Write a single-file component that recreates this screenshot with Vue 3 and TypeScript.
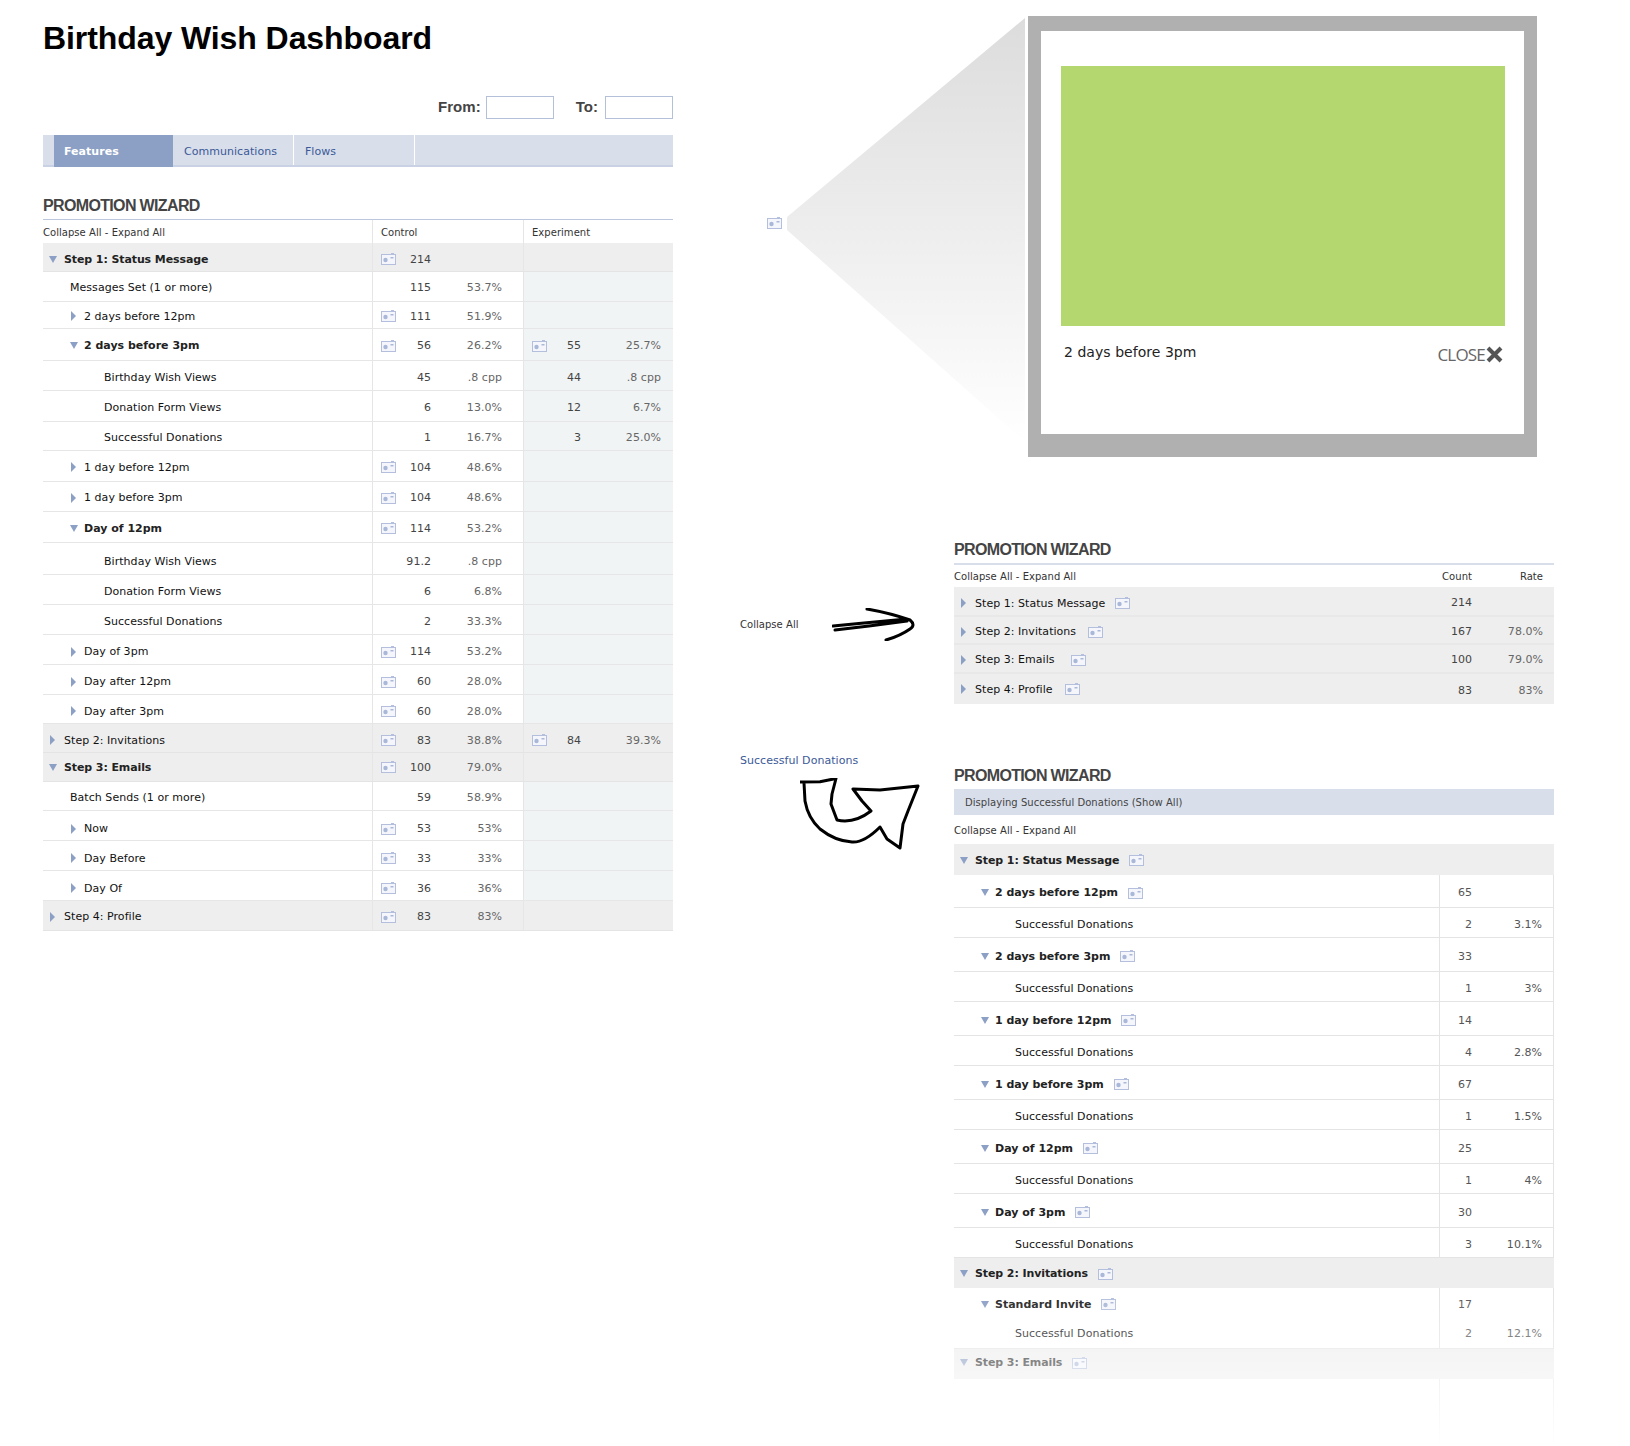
<template>
  <div class="page">
    <svg class="defs" width="0" height="0">
      <symbol id="cam" viewBox="0 0 15 12">
        <rect x="0.5" y="1.5" width="14" height="10" fill="#f4f6fb" stroke="#b3bfdc" />
        <rect x="10" y="0" width="3" height="2" fill="#b3bfdc" />
        <circle cx="4.5" cy="7" r="2.2" fill="#a9b7d8" />
        <rect x="9.5" y="4" width="3" height="1.5" fill="#a9b7d8" />
      </symbol>
    </svg>

    <!-- main dashboard -->
    <main class="dash">
      <h1 class="title">Birthday Wish Dashboard</h1>
      <div class="dates">
        <label class="date-label">From:</label>
        <input class="date-input" type="text" />
        <label class="date-label to">To:</label>
        <input class="date-input" type="text" />
      </div>
      <nav class="tabs">
        <a class="tab active">Features</a>
        <a class="tab">Communications</a>
        <a class="tab">Flows</a>
      </nav>
      <h2 class="heading first">PROMOTION WIZARD</h2>
      <div class="main-head">
        <div class="head-cell">Collapse All - Expand All</div>
        <div class="head-cell ruled pad">Control</div>
        <div class="head-cell ruled pad">Experiment</div>
      </div>
      <div
        v-for="(r, i) in mainRows"
        :key="i"
        class="main-row"
        :class="{ group: r.level === 0 }"
        :style="{ height: r.h + 'px', '--shift': r.s + 'px' }"
      >
        <div class="name" :class="['lv' + r.level, { bold: r.bold }]">
          <i v-if="r.arrow" class="tri" :class="r.arrow"></i>
          <span>{{ r.label }}</span>
        </div>
        <div class="metric">
          <svg v-if="r.c[0]" class="cam"><use href="#cam" /></svg>
          <span v-else></span>
          <span class="count">{{ r.c[1] }}</span>
          <span class="rate">{{ r.c[2] }}</span>
        </div>
        <div class="metric exp">
          <template v-if="r.e">
            <svg v-if="r.e[0]" class="cam"><use href="#cam" /></svg>
            <span v-else></span>
            <span class="count">{{ r.e[1] }}</span>
            <span class="rate">{{ r.e[2] }}</span>
          </template>
        </div>
      </div>
    </main>

    <!-- annotations on the right -->
    <aside class="notes">
      <section class="popup-row">
        <svg class="cam solo"><use href="#cam" /></svg>
        <svg class="wedge" width="238" height="441" viewBox="0 0 238 441">
          <defs>
            <linearGradient id="wedge-fade" x1="0" y1="0" x2="0" y2="1">
              <stop offset="0" stop-color="#dcdcdc" />
              <stop offset="1" stop-color="#ffffff" />
            </linearGradient>
          </defs>
          <polygon points="238,2 0,201 0,214 238,426" fill="url(#wedge-fade)" />
        </svg>
        <div class="window">
          <div class="shot"></div>
          <div class="caption">
            <span>2 days before 3pm</span>
            <span class="close">CLOSE
              <svg width="17" height="17" viewBox="0 0 17 17">
                <path d="M2 2 L15 15 M15 2 L2 15" stroke="#555" stroke-width="4" fill="none" />
              </svg>
            </span>
          </div>
        </div>
      </section>

      <section class="wiz-row collapsed-row">
        <div class="note side">
          <span class="note-label">Collapse All</span>
          <svg width="84" height="33" viewBox="0 0 84 33">
            <path
              d="M1 18 L32 15 L75 11 M3 22 L37 18 L75 13 M35 1 Q58 5 78 12 Q84 17 78 21 Q68 28 54 32"
              fill="none" stroke="#000" stroke-width="3" stroke-linecap="round" stroke-linejoin="round"
            />
          </svg>
        </div>
        <div class="panel">
          <h2 class="heading thick">PROMOTION WIZARD</h2>
          <div class="sum-row sum-head">
            <div>Collapse All - Expand All</div>
            <div class="num">Count</div>
            <div class="num">Rate</div>
          </div>
          <div
            v-for="s in summary"
            :key="s.label"
            class="sum-row sum-item"
            :style="{ height: s.h + 'px', '--shift': s.s + 'px', '--gap': s.gap + 'px' }"
          >
            <div class="name lv0">
              <i class="tri right"></i>
              <span>{{ s.label }}</span>
              <svg class="cam after"><use href="#cam" /></svg>
            </div>
            <div class="num count">{{ s.count }}</div>
            <div class="num rate">{{ s.rate }}</div>
          </div>
        </div>
      </section>

      <section class="wiz-row filtered-row">
        <div class="note stacked">
          <a class="note-link">Successful Donations</a>
          <svg class="swoop" width="122" height="72" viewBox="0 0 122 72">
            <path
              d="M0 4 L20 3.7 L36 0.5 L32 16 L31 26 L37 42 Q54 46 71 33 L62 23 L53 11 L80 12 L118 8 L108 33 L103 46 L100 70 L87 61 L80 49 Q64 65 52 64 Q35 63 20 51 Q8 40 5 23 L4 5"
              fill="none" stroke="#000" stroke-width="3" stroke-linecap="round" stroke-linejoin="round"
            />
          </svg>
        </div>
        <div class="panel">
          <h2 class="heading">PROMOTION WIZARD</h2>
          <div class="banner">Displaying Successful Donations (Show All)</div>
          <div class="filter-head">Collapse All - Expand All</div>
          <div
            v-for="(r, i) in filterRows"
            :key="i"
            class="filter-row"
            :class="{ group: r.level === 0, plain: r.noline, lift: r.lift }"
            :style="{ height: r.h + 'px', '--shift': (r.s ?? 3) + 'px' }"
          >
            <div class="name" :class="['lv' + r.level, { bold: r.arrow }]">
              <i v-if="r.arrow" class="tri down"></i>
              <span>{{ r.label }}</span>
              <svg v-if="r.arrow" class="cam after"><use href="#cam" /></svg>
            </div>
            <div class="num count cell-count">{{ r.count }}</div>
            <div class="num rate">{{ r.rate }}</div>
          </div>
          <div class="filter-row plain" style="height: 68px">
            <div></div>
            <div class="cell-count"></div>
            <div></div>
          </div>
          <div class="fade"></div>
        </div>
      </section>
    </aside>
  </div>
</template>

<script setup lang="ts">
type Metric = [boolean, string, string]

interface MainRow {
  label: string
  level: number
  h: number
  s: number
  bold?: boolean
  arrow?: 'down' | 'right'
  c: Metric
  e?: Metric
}

interface FilterRow {
  label: string
  level: number
  h: number
  s?: number
  arrow?: boolean
  noline?: boolean
  lift?: boolean
  count?: string
  rate?: string
}

// s = how far the row's text sits below the middle (times two), the mock isn't even
const mainRows: MainRow[] = [
  { label: 'Step 1: Status Message', level: 0, h: 29, s: 4, bold: true, arrow: 'down', c: [true, '214', ''] },
  { label: 'Messages Set (1 or more)', level: 1, h: 30, s: 2, c: [false, '115', '53.7%'] },
  { label: '2 days before 12pm', level: 2, h: 27, s: 2, arrow: 'right', c: [true, '111', '51.9%'] },
  { label: '2 days before 3pm', level: 2, h: 32, s: 2, bold: true, arrow: 'down', c: [true, '56', '26.2%'], e: [true, '55', '25.7%'] },
  { label: 'Birthday Wish Views', level: 3, h: 30, s: 4, c: [false, '45', '.8 cpp'], e: [false, '44', '.8 cpp'] },
  { label: 'Donation Form Views', level: 3, h: 31, s: 2, c: [false, '6', '13.0%'], e: [false, '12', '6.7%'] },
  { label: 'Successful Donations', level: 3, h: 29, s: 2, c: [false, '1', '16.7%'], e: [false, '3', '25.0%'] },
  { label: '1 day before 12pm', level: 2, h: 31, s: 2, arrow: 'right', c: [true, '104', '48.6%'] },
  { label: '1 day before 3pm', level: 2, h: 30, s: 2, arrow: 'right', c: [true, '104', '48.6%'] },
  { label: 'Day of 12pm', level: 2, h: 31, s: 2, bold: true, arrow: 'down', c: [true, '114', '53.2%'] },
  { label: 'Birthday Wish Views', level: 3, h: 32, s: 6, c: [false, '91.2', '.8 cpp'] },
  { label: 'Donation Form Views', level: 3, h: 30, s: 4, c: [false, '6', '6.8%'] },
  { label: 'Successful Donations', level: 3, h: 30, s: 4, c: [false, '2', '33.3%'] },
  { label: 'Day of 3pm', level: 2, h: 30, s: 4, arrow: 'right', c: [true, '114', '53.2%'] },
  { label: 'Day after 12pm', level: 2, h: 30, s: 4, arrow: 'right', c: [true, '60', '28.0%'] },
  { label: 'Day after 3pm', level: 2, h: 29, s: 4, arrow: 'right', c: [true, '60', '28.0%'] },
  { label: 'Step 2: Invitations', level: 0, h: 29, s: 4, arrow: 'right', c: [true, '83', '38.8%'], e: [true, '84', '39.3%'] },
  { label: 'Step 3: Emails', level: 0, h: 29, s: 0, bold: true, arrow: 'down', c: [true, '100', '79.0%'] },
  { label: 'Batch Sends (1 or more)', level: 1, h: 29, s: 2, c: [false, '59', '58.9%'] },
  { label: 'Now', level: 2, h: 30, s: 6, arrow: 'right', c: [true, '53', '53%'] },
  { label: 'Day Before', level: 2, h: 30, s: 5, arrow: 'right', c: [true, '33', '33%'] },
  { label: 'Day Of', level: 2, h: 30, s: 5, arrow: 'right', c: [true, '36', '36%'] },
  { label: 'Step 4: Profile', level: 0, h: 30, s: 2, arrow: 'right', c: [true, '83', '83%'] },
]

const summary = [
  { label: 'Step 1: Status Message', count: '214', rate: '', h: 30, s: 4, gap: 10 },
  { label: 'Step 2: Invitations', count: '167', rate: '78.0%', h: 28, s: 3, gap: 12 },
  { label: 'Step 3: Emails', count: '100', rate: '79.0%', h: 29, s: 2, gap: 16 },
  { label: 'Step 4: Profile', count: '83', rate: '83%', h: 30, s: 0, gap: 12 },
]

const filterRows: FilterRow[] = [
  { label: 'Step 1: Status Message', level: 0, h: 31, s: 1, arrow: true },
  { label: '2 days before 12pm', level: 2, h: 33, arrow: true, count: '65' },
  { label: 'Successful Donations', level: 3, h: 30, count: '2', rate: '3.1%' },
  { label: '2 days before 3pm', level: 2, h: 34, arrow: true, count: '33' },
  { label: 'Successful Donations', level: 3, h: 30, count: '1', rate: '3%' },
  { label: '1 day before 12pm', level: 2, h: 34, arrow: true, count: '14' },
  { label: 'Successful Donations', level: 3, h: 30, count: '4', rate: '2.8%' },
  { label: '1 day before 3pm', level: 2, h: 34, arrow: true, count: '67' },
  { label: 'Successful Donations', level: 3, h: 30, count: '1', rate: '1.5%' },
  { label: 'Day of 12pm', level: 2, h: 34, arrow: true, count: '25' },
  { label: 'Successful Donations', level: 3, h: 30, count: '1', rate: '4%' },
  { label: 'Day of 3pm', level: 2, h: 34, arrow: true, count: '30' },
  { label: 'Successful Donations', level: 3, h: 30, count: '3', rate: '10.1%' },
  { label: 'Step 2: Invitations', level: 0, h: 30, s: 1, arrow: true },
  { label: 'Standard Invite', level: 2, h: 30, s: 2, arrow: true, noline: true, count: '17' },
  { label: 'Successful Donations', level: 3, h: 31, s: 0, count: '2', rate: '12.1%' },
  { label: 'Step 3: Emails', level: 0, h: 30, s: 0, lift: true, arrow: true },
]
</script>

<style scoped>
.page {
  display: flex;
  width: 1630px;
  height: 1446px;
  padding-left: 43px;
  box-sizing: border-box;
  overflow: hidden;
  position: relative;
  background: #fff;
  font-family: "DejaVu Sans", sans-serif;
  font-size: 11px;
  letter-spacing: 0.04px;
  color: #222;
}

.defs {
  position: absolute;
}

.dash {
  width: 630px;
  flex: none;
  padding-top: 18px;
}

.title {
  margin: 0;
  font: bold 32px/40px "Liberation Sans", Arial, sans-serif;
  letter-spacing: -0.08px;
  color: #000;
}

.dates {
  display: flex;
  justify-content: flex-end;
  align-items: center;
  margin-top: 38px;
}

.date-label {
  font: bold 15px "Liberation Sans", Arial, sans-serif;
  color: #444;
  margin: 0 5px 2px 0;
}

.date-label.to {
  margin-left: 22px;
  margin-right: 7px;
}

.date-input {
  width: 68px;
  height: 23px;
  box-sizing: border-box;
  border: 1px solid #b4c0da;
  padding: 0;
  background: #fff;
}

.tabs {
  display: flex;
  height: 30px;
  margin-top: 16px;
  padding-left: 11px;
  background: #d8deea;
  border-bottom: 2px solid #c9d2e5;
}

.tab {
  width: 109px;
  padding-left: 10px;
  margin-right: 1px;
  line-height: 34px;
  color: #3b5998;
  border-right: 1px solid #fff;
}

.tab.active {
  height: 32px;
  background: #8c9fc5;
  color: #fff;
  font-weight: bold;
  border-right: none;
  width: 109px;
  margin-right: 1px;
}

.heading {
  margin: 0;
  height: 22px;
  margin-bottom: 1px;
  font: bold 16px/19px "Liberation Sans", Arial, sans-serif;
  letter-spacing: -0.65px;
  color: #444;
}

.heading.first {
  margin-top: 28px;
  margin-bottom: 0;
  height: 24px;
  line-height: 21px;
  border-bottom: 1px solid #bcc6dd;
}

.heading.thick {
  margin-bottom: 0;
  height: 23px;
  border-bottom: 2px solid #d8deea;
}

.main-head,
.main-row {
  display: grid;
  grid-template-columns: 329px 151px 150px;
}

.main-head {
  height: 23px;
  font-size: 10px;
  color: #333;
}

.head-cell {
  line-height: 25px;
}

.ruled {
  border-left: 1px solid #e6e6e6;
}

.pad {
  padding-left: 8px;
}

.main-row {
  box-sizing: border-box;
  border-bottom: 1px solid #e6e6e6;
  align-items: stretch;
}

.main-row.group {
  background: #eee;
  border-bottom-color: #e4e4e4;
}

.name {
  display: flex;
  align-items: center;
  box-sizing: border-box;
  padding-top: var(--shift, 0);
  color: #111;
}

.name.bold {
  font-weight: bold;
  letter-spacing: 0;
  color: #222;
}

.name.lv0.bold {
  letter-spacing: -0.1px;
}

.lift .name {
  padding-bottom: 3px;
}

.lv0 {
  padding-left: 21px;
  position: relative;
}

.lv1 {
  padding-left: 27px;
}

.lv2 {
  padding-left: 41px;
  position: relative;
}

.lv3 {
  padding-left: 61px;
}

.tri {
  position: absolute;
  width: 0;
  height: 0;
  border-style: solid;
  border-color: transparent;
}

.tri.down {
  border-width: 7px 4.5px 0;
  border-top-color: #8c9fc5;
}

.tri.right {
  border-width: 5px 0 5px 5px;
  border-left-color: #8c9fc5;
}

.lv0 .tri.down {
  left: 6px;
}

.lv0 .tri.right {
  left: 7px;
}

.lv2 .tri.down {
  left: 27px;
}

.lv2 .tri.right {
  left: 28px;
}

.metric {
  display: grid;
  grid-template-columns: 16px 34px 71px;
  align-items: center;
  box-sizing: border-box;
  padding: var(--shift, 0) 0 0 8px;
  border-left: 1px solid #e6e6e6;
}

.metric.exp {
  grid-template-columns: 16px 33px 80px;
  background: #f1f4f5;
}

.group .metric {
  background: #eee;
}

.cam {
  display: block;
  width: 15px;
  height: 12px;
}

.count,
.rate,
.num {
  text-align: right;
}

.count {
  color: #444;
}

.rate {
  color: #666;
}

/* right hand column */
.notes {
  width: 814px;
  margin-left: 67px;
  flex: none;
}

.popup-row {
  display: flex;
  padding: 16px 0 0 27px;
}

.cam.solo {
  margin-top: 201px;
}

.wedge {
  margin: 0 3px 0 5px;
  flex: none;
}

.window {
  width: 509px;
  height: 441px;
  box-sizing: border-box;
  border: solid #b0b0b0;
  border-width: 15px 13px 23px;
  padding: 35px 19px 0 20px;
  background: #fff;
}

.shot {
  width: 444px;
  height: 260px;
  background: #b4d770;
}

.caption {
  display: flex;
  justify-content: space-between;
  align-items: center;
  width: 444px;
  height: 20px;
  box-sizing: border-box;
  margin-top: 16px;
  padding: 0 2px 0 3px;
  font-size: 14px;
  line-height: 20px;
}

.close {
  display: flex;
  align-items: center;
  gap: 1px;
  font: 17px "Open Sans", sans-serif;
  letter-spacing: -0.8px;
  color: #666;
  position: relative;
  top: 2px;
}

.wiz-row {
  display: flex;
}

.collapsed-row {
  margin-top: 83px;
}

.filtered-row {
  margin-top: 62px;
}

.note {
  width: 214px;
  flex: none;
}

.side {
  display: flex;
  align-items: center;
  height: 33px;
  margin-top: 68px;
}

.note-label {
  width: 92px;
  font-size: 10px;
  color: #333;
}

.stacked {
  margin-top: -12px;
}

.note-link {
  display: block;
  line-height: 14px;
  color: #3b5998;
}

.swoop {
  display: block;
  margin: 10px 0 0 60px;
}

.panel {
  width: 600px;
  flex: none;
  position: relative;
}

.sum-row {
  display: grid;
  grid-template-columns: 1fr 60px 71px;
  padding-right: 11px;
}

.sum-head {
  height: 22px;
  line-height: 24px;
  font-size: 10px;
  color: #333;
}

.sum-item {
  box-sizing: border-box;
  background: #eee;
  border-bottom: 2px solid #e8e8e8;
  align-items: center;
}

.sum-item .name {
  height: 100%;
}

.sum-item .num {
  padding-top: 2px;
}

.sum-item:last-child {
  border-bottom: none;
}

.cam.after {
  margin-left: var(--gap, 10px);
  flex: none;
}

.banner {
  height: 26px;
  line-height: 28px;
  padding-left: 11px;
  margin-bottom: 2px;
  background: #d8deea;
  font-size: 10px;
  color: #444;
}

.filter-head {
  height: 27px;
  line-height: 27px;
  font-size: 10px;
  color: #333;
}

.filter-row {
  display: grid;
  grid-template-columns: 485px 33px 70px 12px;
  box-sizing: border-box;
  border-bottom: 1px solid #e4e4e4;
  border-right: 1px solid #e4e4e4;
}

.filter-row.plain {
  border-bottom: none;
}

.filter-row.group {
  background: #eee;
  border-bottom: none;
  border-right: none;
}

.filter-row .num {
  color: #555;
  align-self: stretch;
  display: flex;
  align-items: center;
  justify-content: flex-end;
  box-sizing: border-box;
  padding-top: var(--shift, 0);
}

.cell-count {
  box-sizing: border-box;
  border-left: 1px solid #e4e4e4;
}

.group .cell-count {
  border-left: none;
}

.fade {
  position: absolute;
  left: -2px;
  right: -2px;
  bottom: 0;
  height: 156px;
  background: linear-gradient(rgba(255, 255, 255, 0), rgba(255, 255, 255, 0.55) 56%, #fff);
  pointer-events: none;
}
</style>

<style>
html,
body {
  margin: 0;
  background: #fff;
}
</style>
